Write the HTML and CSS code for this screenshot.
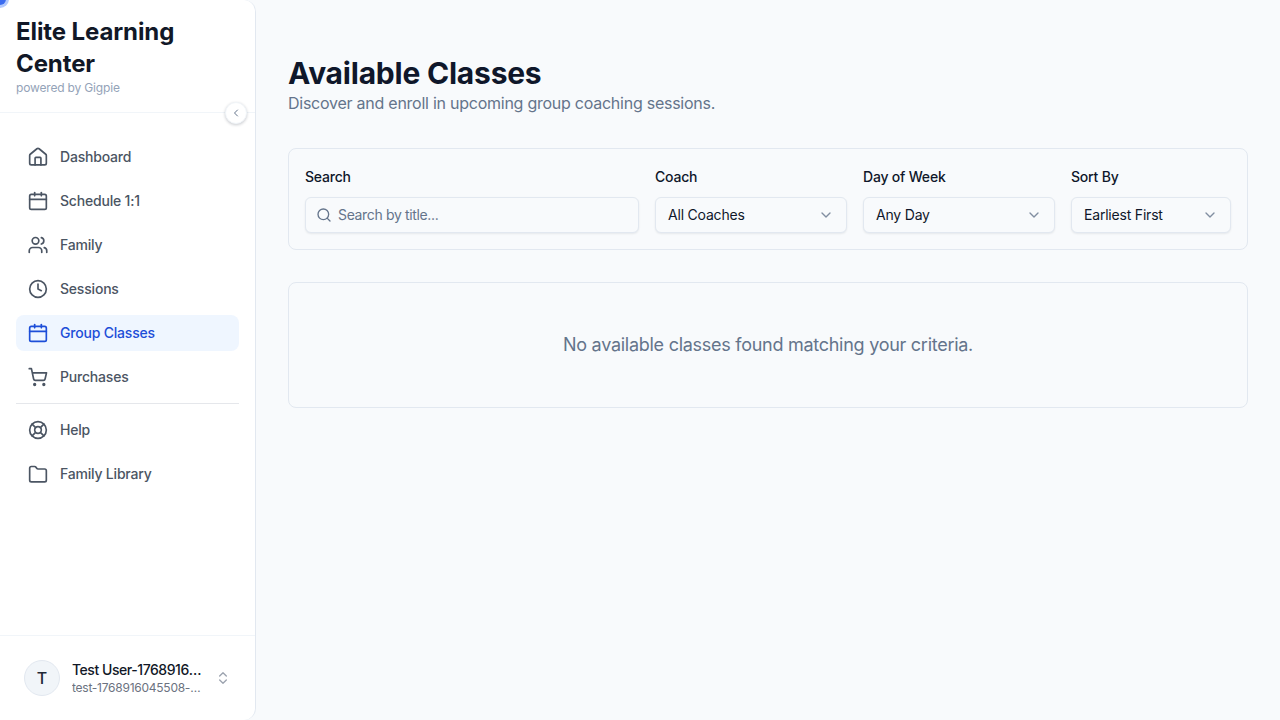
FILE: index.html
```html
<!DOCTYPE html>
<html lang="en">
<head>
<meta charset="utf-8">
<title>Available Classes</title>
<link rel="stylesheet" href="styles.css">
</head>
<body>
<div class="app">
  <span class="dot"></span>
  <aside class="sidebar">
    <header class="brand">
      <h2 class="brand-name">Elite Learning Center</h2>
      <p class="brand-sub">powered by Gigpie</p>
      <button class="collapse" aria-label="Collapse"><svg viewBox="0 0 24 24" class="collapse-icon"><path d="m15 18-6-6 6-6"/></svg></button>
    </header>
    <nav class="nav">
      <a class="nav-item"><svg class="ico" viewBox="0 0 24 24"><path d="M15.5 21.5v-8a1 1 0 0 0-1-1h-5a1 1 0 0 0-1 1v8"/><path d="M2 10.2a2 2 0 0 1 .7-1.5l8-6.6a2 2 0 0 1 2.6 0l8 6.6a2 2 0 0 1 .7 1.5v9.3a2 2 0 0 1-2 2H4a2 2 0 0 1-2-2z"/></svg><span>Dashboard</span></a>
      <a class="nav-item"><svg class="ico" viewBox="0 0 24 24"><path d="M8 1.8v4"/><path d="M16 1.8v4"/><rect x="2" y="4" width="20" height="18" rx="2"/><path d="M2 10h20"/></svg><span>Schedule 1:1</span></a>
      <a class="nav-item"><svg class="ico" viewBox="0 0 24 24"><path d="M16.5 21v-2a4 4 0 0 0-4-4h-7a4 4 0 0 0-4 4v2"/><circle cx="9" cy="7" r="4"/><path d="M22.5 21v-2a4 4 0 0 0-3-3.87"/><path d="M16 3.13a4 4 0 0 1 0 7.75"/></svg><span>Family</span></a>
      <a class="nav-item"><svg class="ico" viewBox="0 0 24 24"><circle cx="12" cy="12" r="10"/><path d="M12 6v6l4 2"/></svg><span>Sessions</span></a>
      <a class="nav-item active"><svg class="ico" viewBox="0 0 24 24"><path d="M8 1.8v4"/><path d="M16 1.8v4"/><rect x="2" y="4" width="20" height="18" rx="2"/><path d="M2 10h20"/></svg><span>Group Classes</span></a>
      <a class="nav-item"><svg class="ico" viewBox="0 0 24 24"><circle cx="8" cy="21" r="1"/><circle cx="19" cy="21" r="1"/><path d="M1.5 2h2.6l2.66 12.42a2 2 0 0 0 2 1.58h9.78a2 2 0 0 0 1.95-1.57L22.2 7H5.12"/></svg><span>Purchases</span></a>
      <hr class="nav-sep">
      <a class="nav-item"><svg class="ico" viewBox="0 0 24 24"><circle cx="12" cy="12" r="10"/><path d="m4.93 4.93 4.24 4.24"/><path d="m14.83 9.17 4.24-4.24"/><path d="m14.83 14.83 4.24 4.24"/><path d="m9.17 14.83-4.24 4.24"/><circle cx="12" cy="12" r="4"/></svg><span>Help</span></a>
      <a class="nav-item"><svg class="ico" viewBox="0 0 24 24"><path d="M20 21.5a2 2 0 0 0 2-2V8a2 2 0 0 0-2-2h-7.9a2 2 0 0 1-1.69-.9L9.6 3.9A2 2 0 0 0 7.93 3H4a2 2 0 0 0-2 2v14.5a2 2 0 0 0 2 2Z"/></svg><span>Family Library</span></a>
    </nav>
    <footer class="user">
      <span class="avatar">T</span>
      <span class="user-text">
        <span class="user-name">Test User-1768916045508</span>
        <span class="user-mail">test-1768916045508-user@example.com</span>
      </span>
      <svg class="updown" viewBox="0 0 24 24"><path d="m7 15 5 5 5-5"/><path d="m7 9 5-5 5 5"/></svg>
    </footer>
  </aside>
  <main class="main">
    <h1 class="title">Available Classes</h1>
    <p class="subtitle">Discover and enroll in upcoming group coaching sessions.</p>
    <section class="filters">
      <div class="field field-search">
        <span class="label">Search</span>
        <div class="control"><svg class="search-ico" viewBox="0 0 24 24"><circle cx="11" cy="11" r="8"/><path d="m21 21-4.3-4.3"/></svg><span class="placeholder">Search by title...</span></div>
      </div>
      <div class="field field-coach">
        <span class="label">Coach</span>
        <div class="control select"><span>All Coaches</span><svg class="chev" viewBox="0 0 24 24"><path d="m6 9 6 6 6-6"/></svg></div>
      </div>
      <div class="field field-day">
        <span class="label">Day of Week</span>
        <div class="control select"><span>Any Day</span><svg class="chev" viewBox="0 0 24 24"><path d="m6 9 6 6 6-6"/></svg></div>
      </div>
      <div class="field field-sort">
        <span class="label">Sort By</span>
        <div class="control select"><span>Earliest First</span><svg class="chev" viewBox="0 0 24 24"><path d="m6 9 6 6 6-6"/></svg></div>
      </div>
    </section>
    <section class="empty"><span>No available classes found matching your criteria.</span></section>
  </main>
</div>
</body>
</html>
```
FILE: styles.css
```css
* { box-sizing: border-box; }
html, body { margin: 0; height: 100%; }
body { font-family: Inter, "Liberation Sans", sans-serif; background: #f8fafc; color: #0f172a; overflow: hidden; }
svg { fill: none; stroke: currentColor; stroke-width: 2; stroke-linecap: round; stroke-linejoin: round; flex: none; }
.app { display: flex; height: 720px; position: relative; }
.dot { position: absolute; left: -6px; top: -7px; width: 12px; height: 12px; border-radius: 50%; background: #3b6cf0; box-shadow: 0 0 0 3px #b4cafc; z-index: 3; }
.sidebar { width: 256px; flex: none; background: #fff; border-right: 1px solid #e2e8f0; border-radius: 0 12px 12px 0; display: flex; flex-direction: column; }
.brand { position: relative; height: 113px; padding: 16px 16px 0; border-bottom: 1px solid #f1f5f9; }
.brand-name { margin: 0; font-size: 24px; line-height: 32px; font-weight: 700; color: #111827; letter-spacing: -0.1px; }
.brand-sub { margin: 0; font-size: 12px; line-height: 16px; color: #94a3b8; letter-spacing: -0.17px; }
.collapse { position: absolute; right: 8px; bottom: -12px; width: 22px; height: 22px; padding: 0; border: 1px solid #f1f5f9; border-radius: 50%; background: #fff; color: #64748b; box-shadow: 0 1px 3px rgba(15,23,42,.22); display: flex; align-items: center; justify-content: center; z-index: 2; }
.collapse-icon { width: 12px; height: 12px; }
.nav { flex: 1; padding: 26px 16px 0; display: flex; flex-direction: column; gap: 8px; }
.nav-item { display: flex; align-items: center; gap: 12px; height: 36px; padding: 0 12px; border-radius: 8px; font-size: 14px; font-weight: 500; color: #4b5563; letter-spacing: -0.2px; }
.nav-item span { margin-bottom: 2px; }
.nav-item.active { background: #eff6ff; color: #1d4ed8; }
.ico { width: 20px; height: 20px; }
.nav-sep { width: 100%; height: 1px; margin: 0; border: 0; background: #e5e7eb; }
.user { height: 85px; border-top: 1px solid #f1f5f9; padding: 0 24px; display: flex; align-items: center; gap: 12px; }
.avatar { width: 36px; height: 36px; flex: none; border-radius: 50%; background: #f1f5f9; border: 1px solid #e2e8f0; display: flex; align-items: center; justify-content: center; font-size: 16px; font-weight: 500; color: #1f2937; }
.user-text { display: flex; flex-direction: column; width: 131px; min-width: 0; gap: 1px; }
.user-name, .user-mail { white-space: nowrap; overflow: hidden; text-overflow: ellipsis; }
.user-name { font-size: 14px; line-height: 18px; font-weight: 500; color: #111827; letter-spacing: -0.45px; }
.user-mail { font-size: 12px; line-height: 16px; color: #6b7280; letter-spacing: -0.25px; }
.updown { width: 16px; height: 16px; color: #9ca3af; }
.main { flex: 1; padding: 55px 32px 0; }
.title { margin: 0; font-size: 30px; line-height: 36px; font-weight: 700; color: #0f172a; letter-spacing: -0.22px; }
.subtitle { margin: 0; font-size: 16px; line-height: 24px; color: #64748b; letter-spacing: -0.25px; }
.filters { margin-top: 33px; height: 102px; border: 1px solid #e2e8f0; border-radius: 8px; padding: 16px; display: flex; gap: 16px; }
.field { display: flex; flex-direction: column; gap: 8px; }
.field-search { flex: 1; }
.field-coach, .field-day { width: 192px; }
.field-sort { width: 160px; }
.label { font-size: 14px; line-height: 24px; font-weight: 500; color: #0f172a; letter-spacing: -0.2px; }
.control { height: 36px; border: 1px solid #e2e8f0; border-radius: 6px; background: #f8fafc; box-shadow: 0 1px 2px rgba(15,23,42,.08); display: flex; align-items: center; padding: 0 12px 1px; font-size: 14px; color: #0f172a; letter-spacing: -0.2px; }
.select { justify-content: space-between; }
.chev, .search-ico { margin-top: 1px; }
.search-ico { width: 16px; height: 16px; color: #64748b; margin-left: -2px; margin-right: 6px; }
.placeholder { color: #64748b; letter-spacing: -0.35px; }
.chev { width: 16px; height: 16px; color: #64748b; opacity: .8; }
.empty { margin-top: 32px; height: 126px; border: 1px solid #e2e8f0; border-radius: 8px; padding-bottom: 2px; display: flex; align-items: center; justify-content: center; font-size: 18px; color: #64748b; letter-spacing: -0.27px; }
```
